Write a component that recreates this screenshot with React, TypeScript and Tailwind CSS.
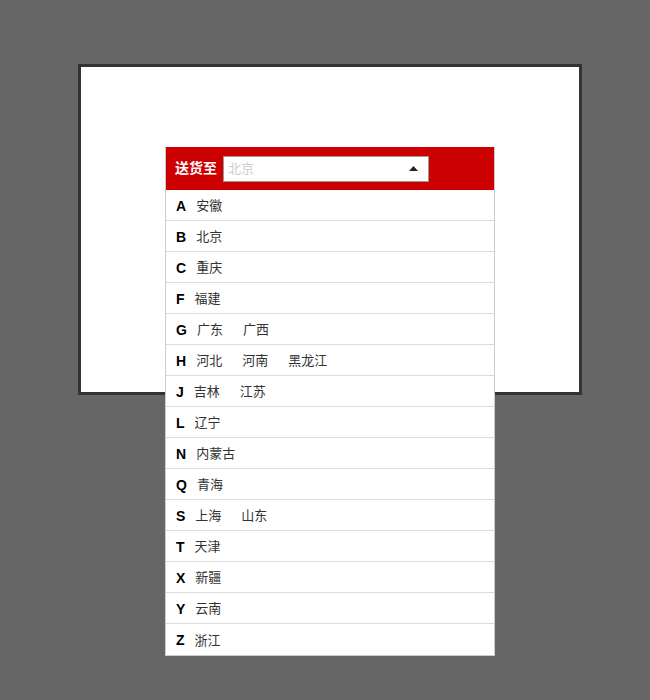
import React from 'react';

const provinces: { letter: string; cities: string[] }[] = [
  { letter: 'A', cities: ['安徽'] },
  { letter: 'B', cities: ['北京'] },
  { letter: 'C', cities: ['重庆'] },
  { letter: 'F', cities: ['福建'] },
  { letter: 'G', cities: ['广东', '广西'] },
  { letter: 'H', cities: ['河北', '河南', '黑龙江'] },
  { letter: 'J', cities: ['吉林', '江苏'] },
  { letter: 'L', cities: ['辽宁'] },
  { letter: 'N', cities: ['内蒙古'] },
  { letter: 'Q', cities: ['青海'] },
  { letter: 'S', cities: ['上海', '山东'] },
  { letter: 'T', cities: ['天津'] },
  { letter: 'X', cities: ['新疆'] },
  { letter: 'Y', cities: ['云南'] },
  { letter: 'Z', cities: ['浙江'] },
];

export default function App() {
  return (
    <div className="min-h-[700px] w-[650px] bg-[#666666] pt-[64px] pl-[78px] font-['Liberation_Sans','Noto_Sans_CJK_SC',sans-serif]">
      {/* outer frame */}
      <div className="relative h-[331px] w-[504px] border-[3px] border-[#333333] bg-white">
        {/* dropdown panel */}
        <div className="absolute left-[84px] top-[80px] w-[330px] border-x border-b border-[#cccccc] bg-white">
          <div className="flex h-[43px] items-center bg-[#cc0000] pl-[9px]">
            <span className="text-[14px] font-bold text-white">送货至</span>
            <div className="ml-[6px] flex h-[26px] w-[206px] items-center justify-between border border-[#999999] bg-white pl-[4px] pr-[10px]">
              <span className="text-[13px] text-[#cccccc]">北京</span>
              <svg width="9" height="5" viewBox="0 0 9 5">
                <path d="M0 5 L4.5 0 L9 5 Z" fill="#222" />
              </svg>
            </div>
          </div>
          {provinces.map((p, i) => (
            <div
              key={p.letter}
              className={
                'flex h-[31px] items-center pl-[10px] pt-[2px] ' +
                (i < provinces.length - 1 ? 'border-b border-[#dddddd]' : '')
              }
            >
              <span className="mr-[10px] text-[14px] font-bold text-black">{p.letter}</span>
              <div className="flex gap-[20px] text-[13px] text-[#333333]">
                {p.cities.map((c) => (
                  <span key={c}>{c}</span>
                ))}
              </div>
            </div>
          ))}
        </div>
      </div>
    </div>
  );
}
